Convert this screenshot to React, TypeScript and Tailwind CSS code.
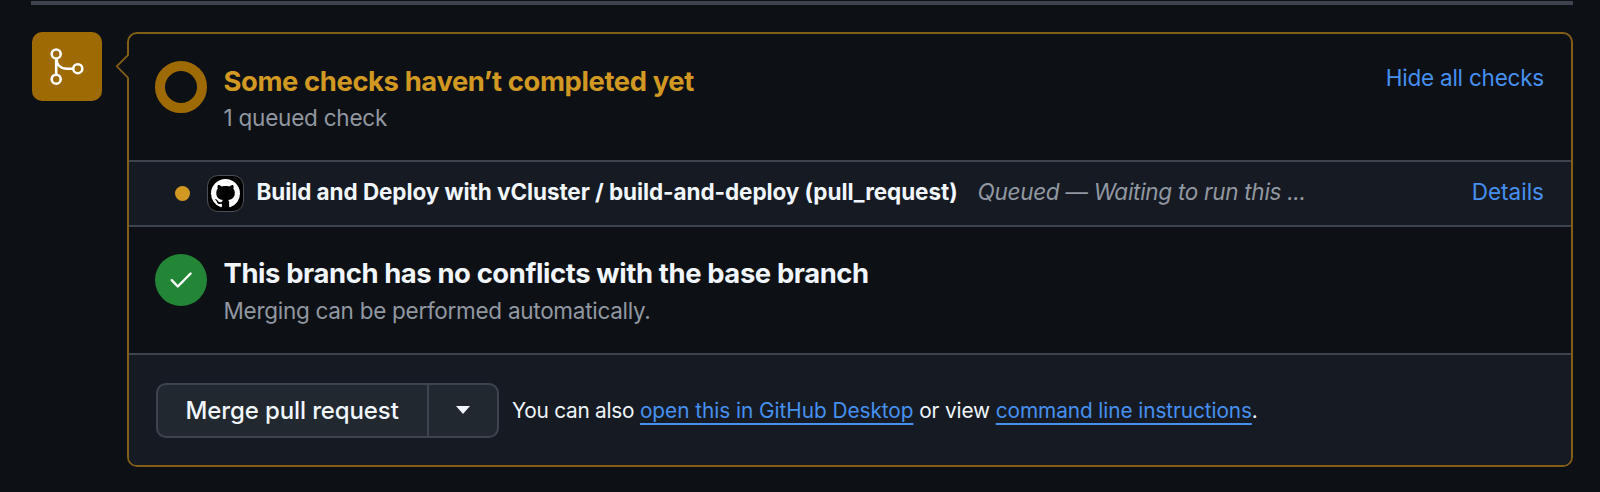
import React from "react";

function MergeIcon() {
  return (
    <svg width="70" height="69" viewBox="0 0 70 69" fill="none" stroke="#ffffff" strokeWidth="2.6" aria-hidden="true">
      <circle cx="24.2" cy="22" r="4.5" />
      <circle cx="24.2" cy="47.2" r="4.5" />
      <circle cx="45.8" cy="36.7" r="4.5" />
      <path d="M24.2 26.5V42.7M24.4 27C24.8 33 28.8 36.7 35 36.7H41.3" />
    </svg>
  );
}

function GitHubMark() {
  return (
    <svg width="29" height="29" viewBox="0 0 16 16" fill="#ffffff" aria-hidden="true">
      <path d="M8 0c4.42 0 8 3.58 8 8a8.013 8.013 0 0 1-5.45 7.59c-.4.08-.55-.17-.55-.38 0-.27.01-1.13.01-2.2 0-.75-.25-1.23-.54-1.48 1.78-.2 3.65-.88 3.65-3.95 0-.88-.31-1.59-.82-2.15.08-.2.36-1.02-.08-2.12 0 0-.67-.22-2.2.82-.64-.18-1.32-.27-2-.27-.68 0-1.36.09-2 .27-1.53-1.03-2.2-.82-2.2-.82-.44 1.1-.16 1.92-.08 2.12-.51.56-.82 1.28-.82 2.15 0 3.06 1.86 3.75 3.64 3.95-.23.2-.44.55-.51 1.07-.46.21-1.61.55-2.33-.66-.15-.24-.6-.83-1.23-.82-.67.01-.27.38.01.53.34.19.73.9.82 1.13.16.45.68 1.31 2.69.94 0 .67.01 1.3.01 1.49 0 .21-.15.45-.55.38A7.995 7.995 0 0 1 0 8c0-4.42 3.58-8 8-8Z" />
    </svg>
  );
}

function CheckIcon() {
  return (
    <svg width="24" height="20" viewBox="0 0 24 20" fill="none" stroke="#ffffff" strokeWidth="2.4" strokeLinecap="round" strokeLinejoin="round" aria-hidden="true">
      <path d="M2.7 10.2L8.8 16.5L21.6 3.5" />
    </svg>
  );
}

export default function App() {
  return (
    <div className="flex h-[492px] w-[1600px] flex-col overflow-hidden bg-[#0d1116] font-['Inter','Liberation_Sans',sans-serif] text-[#f0f6fc]">
      <div className="mt-px ml-[31px] h-[3.5px] w-[1542px] shrink-0 bg-[#3d444d]" />
      <div className="mt-[27.5px] flex items-start pl-8">
        <div className="-mt-[0.5px] h-[69px] w-[70px] shrink-0 rounded-[10px] bg-[#9e6a03]">
          <MergeIcon />
        </div>
        <section className="relative ml-[25px] h-[435px] w-[1446px] shrink-0 rounded-[10px] border-2 border-[#835e17]">
          <svg className="absolute top-[19px] -left-[14px]" width="15" height="27" viewBox="0 0 15 27" aria-hidden="true">
            <path d="M14.5 1.5L2 13.5L14.5 25.5Z" fill="#0d1116" />
            <path d="M13.2 1.8L1.8 13.3L13.2 24.9" fill="none" stroke="#835e17" strokeWidth="1.8" />
          </svg>

          <div className="flex h-[126px] items-start pr-[27px] pl-[25.5px]">
            <div className="mt-[27px] h-[52px] w-[52px] rounded-full border-[10.5px] border-[#9e6a03]" />
            <div className="mt-[28px] ml-[17px] flex-1">
              <h3 className="pt-px text-[27.4px] leading-[36px] font-bold tracking-[-0.39px] text-[#d29922]">Some checks haven’t completed yet</h3>
              <p className="text-[22.5px] leading-[37px] tracking-[-0.22px] text-[#9198a1]">1 queued check</p>
            </div>
            <a className="mt-[25px] text-[22.5px] leading-[37px] tracking-[-0.22px] text-[#4690f0]">Hide all checks</a>
          </div>

          <div className="flex h-[67px] items-center border-y-2 border-[#3d444d] bg-[#161b23] pr-[27px] pl-[46px]">
            <span className="h-[15px] w-[15px] rounded-full bg-[#d29922]" />
            <span className="ml-[17px] flex h-[37px] w-[37px] items-center justify-center rounded-[11px] border border-[#4a4f56] bg-black">
              <GitHubMark />
            </span>
            <span className="ml-[12.5px] pb-[3px] text-[22.5px] font-bold tracking-[-0.08px]">Build and Deploy with vCluster / build-and-deploy (pull_request)</span>
            <span className="ml-[20px] pb-[3px] text-[22.5px] tracking-[-0.29px] text-[#9198a1] italic">Queued — Waiting to run this ...</span>
            <a className="ml-auto pb-[3px] text-[22.5px] text-[#4690f0]">Details</a>
          </div>

          <div className="flex h-[126px] items-start pl-[25.5px]">
            <div className="mt-[27px] flex h-[52px] w-[52px] items-center justify-center rounded-full bg-[#238636]">
              <CheckIcon />
            </div>
            <div className="mt-[28px] ml-[17px]">
              <h3 className="text-[27.4px] leading-[37px] font-bold tracking-[-0.38px]">This branch has no conflicts with the base branch</h3>
              <p className="text-[22.5px] leading-[37px] tracking-[-0.28px] text-[#9198a1]">Merging can be performed automatically.</p>
            </div>
          </div>

          <div className="flex h-[112px] items-center rounded-b-[8px] border-t-2 border-[#3d444d] bg-[#161b23] pl-[27px]">
            <div className="flex h-[55px] w-[343px] rounded-[10px] border-2 border-[#3d444d] bg-[#212830]">
              <button className="flex w-[271px] items-center border-r-2 border-[#3d444d] pt-[2px] pl-[27.5px] text-[24px] font-medium tracking-[-0.12px]">Merge pull request</button>
              <button className="flex flex-1 items-center justify-center" aria-label="Select merge method">
                <svg width="14" height="8" viewBox="0 0 14 8" fill="#f0f6fc" aria-hidden="true">
                  <path d="M0 0H14L7 8Z" />
                </svg>
              </button>
            </div>
            <p className="ml-[13px] pt-px text-[20.8px] whitespace-pre">
              <span className="tracking-[-0.24px]">You can also </span>
              <a className="tracking-[-0.04px] text-[#4690f0] underline decoration-2 underline-offset-[5px]">open this in GitHub Desktop</a>
              <span className="tracking-[-0.12px]"> or view </span>
              <a className="tracking-[-0.09px] text-[#4690f0] underline decoration-2 underline-offset-[5px]">command line instructions</a>.
            </p>
          </div>
        </section>
      </div>
    </div>
  );
}
